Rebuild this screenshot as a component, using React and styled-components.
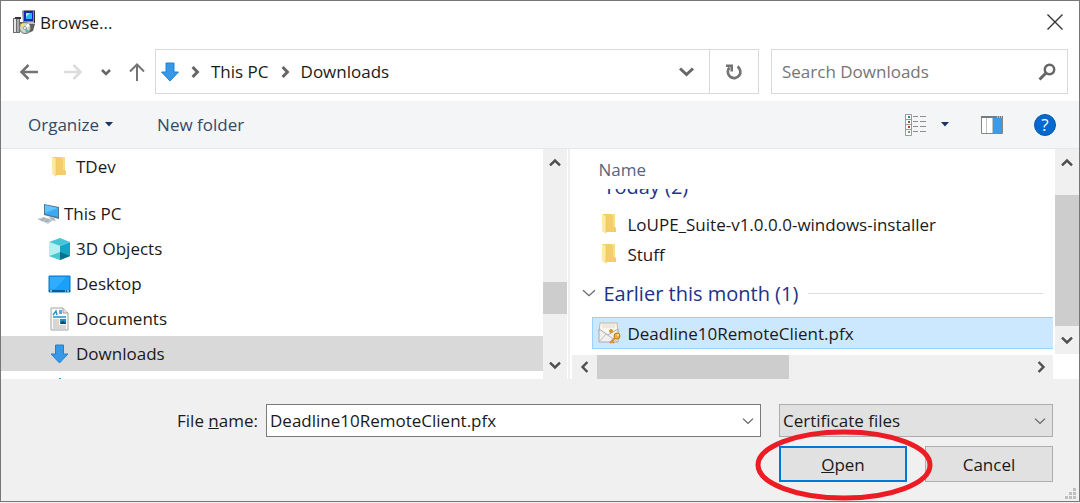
import React, { useState } from 'react';
import styled, { createGlobalStyle } from 'styled-components';

const GlobalStyle = createGlobalStyle`
    * {
        box-sizing: border-box;
    }
    body {
        margin: 0;
        background: #f0f0f0;
    }
    body, button, input, select {
        font-family: "Open Sans", "Noto Sans", sans-serif;
        font-size: 17px;
        color: #1a1a1a;
    }
    button {
        padding: 0;
        border: 0;
        background: none;
    }
    svg {
        display: block;
        flex: none;
    }
`

const Dialog = styled.div`
    display: flex;
    flex-direction: column;
    min-height: calc(100vh - 1px);
    border: 1px solid #777;
    background: #f0f0f0;
`

const TitleBar = styled.header`
    display: flex;
    align-items: center;
    gap: 4px;
    height: 44px;
    padding: 0 15px 2px 11px;
    background: #fff;
`

const Title = styled.h1`
    flex: 1;
    margin: 0;
    font-size: 17px;
    font-weight: 400;
`

const NavBar = styled.nav`
    display: flex;
    gap: 12px;
    height: 56px;
    padding: 4px 11px 7px 18px;
    background: #fff;
`

const NavButtons = styled.div`
    display: grid;
    grid-template-columns: 44px 38px 26px 18px;
    align-items: center;
    margin-right: -2px;
`

const Box = styled.div`
    display: flex;
    align-items: center;
    border: 1px solid #d9d9d9;
    background: #fff;
`

const AddressBar = styled(Box)`
    flex: 1;
    gap: 10px;
    padding-left: 5px;
`

const Crumb = styled.a`
    color: #1a1a1a;
    text-decoration: none;
`

const HistoryButton = styled.button`
    margin-left: auto;
    padding: 0 5px;
`

const RefreshButton = styled.button`
    display: flex;
    align-items: center;
    justify-content: center;
    width: 49px;
    height: 100%;
    border-left: 1px solid #d9d9d9;
`

const SearchBox = styled(Box)`
    width: 297px;
    padding: 0 11px 0 10px;
`

const SearchInput = styled.input`
    flex: 1;
    min-width: 0;
    padding: 0;
    border: 0;
    outline: 0;
    &::placeholder {
        color: #757575;
        opacity: 1;
    }
`

const Toolbar = styled.div`
    display: flex;
    align-items: center;
    height: 48px;
    padding: 0 23px 0 27px;
    border-bottom: 1px solid #e5e8eb;
    background: #f4f5f7;
`

const ToolButton = styled.button`
    display: flex;
    align-items: center;
    gap: 6px;
    margin-right: ${props => props.$space || 0}px;
    color: #33496b;
`

const Push = styled.span`
    flex: 1;
`

const Main = styled.main`
    display: flex;
    height: 230px;
    background: #fff;
`

const TreePane = styled.div`
    display: flex;
    flex: 568;
    min-width: 0;
    border-right: 1px solid #fff;
`

const Tree = styled.ul`
    flex: 1;
    min-width: 0;
    margin: 0;
    padding: 0;
    overflow: hidden;
    list-style: none;
`

const TreeItem = styled.li`
    display: flex;
    align-items: center;
    gap: ${props => props.$root ? 4 : 5}px;
    height: 35px;
    margin-top: ${props => props.$root ? 12 : 0}px;
    padding-left: ${props => props.$root ? 35 : 47}px;
    background: ${props => props.$selected ? '#d9d9d9' : 'transparent'};
`

const FilePane = styled.div`
    display: flex;
    flex: 510;
    flex-direction: column;
    min-width: 0;
    border-left: 2px solid #f0f0f0;
`

const FileArea = styled.div`
    display: flex;
    flex: 1;
    gap: 2px;
    min-height: 0;
`

const FileList = styled.div`
    flex: 1;
    min-width: 0;
    overflow: hidden;
    padding-left: 12px;
`

const ColumnHeader = styled.div`
    position: relative;
    height: 40px;
    padding: 9px 16px 0;
    line-height: 24px;
    color: #54657e;
    background: #fff;
`

const Group = styled.div`
    display: flex;
    align-items: center;
    gap: 7px;
    height: 48px;
    padding-right: 10px;
    font-size: 20px;
    color: #1e3287;
    &::after {
        content: "";
        flex: 1;
        margin-left: 3px;
        border-top: 1px solid #dedede;
    }
`

/* scrolled halfway under the column header */
const ScrolledGroup = styled.div`
    height: 20px;
    padding-left: 21px;
    overflow: hidden;
    font-size: 20px;
    line-height: 28px;
    color: #1e3287;
    & > span {
        display: block;
        margin-top: -16px;
    }
`

const FileRow = styled.div`
    display: flex;
    align-items: center;
    gap: 6px;
    height: ${props => props.$selected ? 32 : 30}px;
    margin-left: 10px;
    padding-left: 5px;
    border: 1px solid ${props => props.$selected ? '#99d1ff' : 'transparent'};
    border-right: 0;
    background: ${props => props.$selected ? '#cce8ff' : 'transparent'};
`

const ScrollBar = styled.div`
    display: flex;
    flex-direction: ${props => props.$horizontal ? 'row' : 'column'};
    flex: none;
    ${props => props.$horizontal ? 'height: 24px;' : 'width: 24px;'}
    background: #f0f0f0;
`

const ScrollButton = styled.button`
    display: flex;
    align-items: center;
    justify-content: center;
    flex: none;
    width: ${props => props.$horizontal ? 25 : 24}px;
    height: ${props => props.$horizontal ? 24 : 28}px;
`

const Track = styled.div`
    display: flex;
    flex-direction: inherit;
    flex: 1;
`

const Gap = styled.div`
    flex: ${props => props.$size};
`

const Thumb = styled(Gap)`
    background: #cdcdcd;
`

const BottomScroll = styled.div`
    margin: 1px 26px 0 2px;
`

const Footer = styled.footer`
    display: grid;
    grid-template-columns: 1fr 495px 274px;
    grid-template-rows: 33px 36px;
    gap: 9px 18px;
    padding: 25px 26px 0 0;
`

const FileLabel = styled.label`
    margin-right: -10px;
    text-align: right;
    line-height: 34px;
`

const FileField = styled.div`
    display: flex;
    align-items: center;
    padding: 0 6px 0 3px;
    border: 1px solid #7a7a7a;
    background: #fff;
`

const FileInput = styled.input`
    flex: 1;
    min-width: 0;
    padding: 0;
    border: 0;
    outline: 0;
    background: none;
`

const SelectField = styled.div`
    display: grid;
    align-items: center;
    border: 1px solid #adadad;
    background: #e1e1e1;
    & > * {
        grid-area: 1 / 1;
    }
    & > svg {
        justify-self: end;
        margin-right: 6px;
        pointer-events: none;
    }
`

const Select = styled.select`
    appearance: none;
    width: 100%;
    height: 100%;
    padding: 0 24px 0 3px;
    border: 0;
    outline: 0;
    background: none;
`

const Actions = styled.div`
    display: grid;
    grid-column: 3;
    grid-template-columns: 1fr 1fr;
    gap: 18px;
`

const ActionButton = styled.button`
    position: relative;
    height: 36px;
    border: ${props => props.$primary ? '2px solid #0078d7' : '1px solid #adadad'};
    background: #e1e1e1;
`

const Highlight = styled.svg`
    position: absolute;
    top: -19px;
    left: -26px;
    z-index: 1;
    pointer-events: none;
`

const Grip = styled.svg`
    position: absolute;
    right: 3px;
    bottom: 3px;
`

const turns = { up: 180, down: 0, left: 90, right: -90 };

const Chevron = ({ dir = 'down', size = 12, weight = 3, color = '#666' }) => (
    <svg width={size} height={size} viewBox={`0 0 ${size} ${size}`}>
        <path
            d={`M1 ${size * 0.3}L${size / 2} ${size * 0.7}L${size - 1} ${size * 0.3}`}
            transform={`rotate(${turns[dir]} ${size / 2} ${size / 2})`}
            fill="none"
            stroke={color}
            strokeWidth={weight}
        />
    </svg>
)

const Arrow = ({ angle = 0, color = '#737373', weight = 2.5 }) => (
    <svg width="20" height="20" viewBox="0 0 20 20">
        <path transform={`rotate(${angle} 10 10)`} d="M19 10H2.500M9.500 3L2.500 10L9.500 17" fill="none" stroke={color} strokeWidth={weight} />
    </svg>
)

const Caret = () => (
    <svg width="8" height="5" viewBox="0 0 8 5"><path d="M0 0H8L4 4.500Z" fill="#1c355e" /></svg>
)

const InstallerIcon = () => (
    <svg width="24" height="25" viewBox="0 0 24 25">
        <path d="M1 8H8V23H1Z" fill="#6d6d6d" />
        <path d="M2 9H4V22H2Z" fill="#e4e4e4" />
        <path d="M5 9H7V22H5Z" fill="#a9a9a9" />
        <path d="M3 7H9V9H3Z" fill="#333" />
        <path d="M8 12L20 12L23 14L21 21L14 24L8 21Z" fill="#5f5f58" />
        <path d="M10 1L12 0H23V13H11Z" fill="#8a8a8a" />
        <path d="M22 1H23V13H22Z" fill="#333" />
        <path d="M12 1H21V11H12Z" fill="#0a2bb0" />
        <path d="M14 3H20V9H14Z" fill="#22b7ff" />
        <path d="M14 3H18L14 7Z" fill="#a9edff" />
        <path d="M12 12H22V14H12Z" fill="#bdbdbd" />
        <circle cx="13" cy="18" r="5.500" fill="#ccd8c7" stroke="#777" />
        <path d="M13 18L8 15L11 13Z" fill="#f5e45f" />
        <path d="M13 18L16 13L18 16Z" fill="#fff" />
        <path d="M13 18L17 21L14 23Z" fill="#48b9bb" />
        <circle cx="13" cy="18" r="1.500" fill="#fff" stroke="#555" strokeWidth=".5" />
    </svg>
)

const DownloadIcon = ({ width = 24 }) => (
    <svg width={width} height="20" viewBox={`${(18 - width) / 2} 0 ${width} 20`}>
        <path d="M5 1H13V10H17.500L9 19L.5 10H5Z" fill="#3898e8" stroke="#2381d2" />
    </svg>
)

const FolderIcon = () => (
    <svg width="23" height="22" viewBox="0 0 23 22">
        <path d="M4 1H17V14L18 15V19H8Z" fill="#f3cd67" />
        <path d="M13 1H17V14H15V4Z" fill="#f9dc87" />
        <path d="M4 1L8 3V21L4 18Z" fill="#ffe9a6" />
        <path d="M8 3V20" stroke="#eac35c" strokeWidth=".6" />
    </svg>
)

const ComputerIcon = () => (
    <svg width="24" height="22" viewBox="0 0 24 22">
        <path d="M8 1L23 4V16L8 12Z" fill="#55758e" />
        <path d="M9 2L22 5V14L9 11Z" fill="#3aaaf5" />
        <path d="M9 2L22 5L9 10Z" fill="#62c3ff" />
        <path d="M13 14L18 15L20 18L15 17Z" fill="#aab5be" />
        <path d="M1 16L8 14L17 17L12 21Z" fill="#c8d0d5" />
        <path d="M3 16L13 19M6 15L15 18M5 18L9 15M9 19L13 16" stroke="#8d9aa3" strokeWidth=".6" />
    </svg>
)

const CubeIcon = () => (
    <svg width="23" height="22" viewBox="0 0 23 22">
        <path d="M1 4L12 8V18L12 22L1 18Z" fill="#8ce3e9" />
        <path d="M12 8L22 4V18L12 22Z" fill="#10a5c9" />
        <path d="M1 4L12 0L22 4L12 8Z" fill="#45c5d5" />
        <path d="M1 18L12 14V22Z" fill="#48c6d3" />
        <path d="M12 14L22 18L12 22Z" fill="#08718c" />
        <path d="M1 4L12 8V14L1 18Z" fill="#b4f0f1" />
    </svg>
)

const DesktopIcon = () => (
    <svg width="23" height="18" viewBox="0 0 23 18">
        <path d="M1 1H22V17H1Z" fill="#18a0fb" stroke="#0874c9" />
        <path d="M2 2H18L7 14H2Z" fill="#30adff" />
        <path d="M1 15H22V17H1Z" fill="#075d9c" />
        <path d="M2 16H4M17 16H18M19 16H21" stroke="#fff" />
    </svg>
)

const DocumentIcon = () => (
    <svg width="23" height="24" viewBox="0 0 23 24">
        <path d="M3 1H15L20 6V23H3Z" fill="#fafafa" stroke="#a4a4a4" />
        <path d="M15 1V6H20" fill="#e4e4e4" stroke="#a4a4a4" />
        <path d="M5 8L8 4L9 8M11 4H14M11 6H14M5 10H18" stroke="#2592cd" strokeWidth="1.400" fill="none" />
        <path d="M5 13H11M5 15H11M5 17H11M5 19H18M5 21H18" stroke="#b1b1b1" />
        <path d="M12 12H18V17H12Z" fill="#2189c8" />
        <path d="M13 15L15 14L18 16V17H12Z" fill="#164b5d" />
    </svg>
)

const CertificateIcon = () => (
    <svg width="23" height="24" viewBox="0 0 23 24">
        <path d="M2 2H19L20 12L10 16L1 11Z" fill="#faf7ef" stroke="#c9b69b" />
        <path d="M4 4H17M4 6H17" stroke="#e2dace" />
        <path d="M1 8L10 14L20 8V21H1Z" fill="#f1f1ef" stroke="#aaa" />
        <path d="M1 21L8 13L11 15L20 21" fill="none" stroke="#bbb" />
        <circle cx="13" cy="10" r="2" fill="#d79a16" />
        <circle cx="19" cy="15" r="3" fill="#efb23e" stroke="#b97816" />
        <path d="M17 17L12 22M14 20L16 22" stroke="#d89426" strokeWidth="2.200" />
        <circle cx="20" cy="14" r="1" fill="#fff2c4" />
    </svg>
)

const RefreshIcon = () => (
    <svg width="18" height="18" viewBox="0 0 18 18">
        <path d="M12.500 3.500A6.300 6.300 0 1 1 4.500 4.500" fill="none" stroke="#737373" strokeWidth="2.700" />
        <path d="M1 1.500H8V8.500H5.500V4H1Z" fill="#737373" />
    </svg>
)

const SearchIcon = () => (
    <svg width="18" height="18" viewBox="0 0 18 18">
        <circle cx="11.500" cy="6.500" r="4.700" fill="none" stroke="#666" strokeWidth="2.500" />
        <path d="M8 10L1.500 16.500" stroke="#666" strokeWidth="3" />
    </svg>
)

const ViewIcon = () => (
    <svg width="22" height="22" viewBox="0 0 22 22">
        <path d="M.5 .5H6.500V21.500H.5ZM.5 5.500H6.500M.5 10.500H6.500M.5 15.500H6.500" fill="#fff" stroke="#999" />
        <path d="M3 2H5V4H3Z" fill="#258c9c" />
        <path d="M3 7H5V9H3Z" fill="#6c6d29" />
        <path d="M3 12H5V14H3Z" fill="#df2a18" />
        <path d="M3 17H5V19H3Z" fill="#6b9d6e" />
        <path d="M8 2.500H13M15 2.500H21M8 7.500H13M15 7.500H21M8 12.500H13M15 12.500H21M8 17.500H13M15 17.500H21" stroke="#8c8c8c" />
    </svg>
)

const PaneIcon = () => (
    <svg width="22" height="18" viewBox="0 0 22 18">
        <path d="M.5 .5H21.500V17.500H.5Z" fill="#fff" stroke="#858585" />
        <path d="M0 0H22V2H0Z" fill="#7b7b7b" />
        <path d="M5.500 2V17M11.500 2V17" stroke="#c4c4c4" />
        <path d="M12 2H21V17H12Z" fill="#3c9be6" />
        <path d="M16 1H17M18 1H19M20 1H21" stroke="#fff" />
    </svg>
)

const HelpBadge = styled.span`
    display: block;
    width: 22px;
    height: 22px;
    border: 1px solid #075aa5;
    border-radius: 50%;
    background: #0568cf;
    color: #fff;
    line-height: 20px;
    text-align: center;
`

const places = [
    { name: 'TDev', icon: <FolderIcon /> },
    { name: 'This PC', icon: <ComputerIcon />, root: true },
    { name: '3D Objects', icon: <CubeIcon /> },
    { name: 'Desktop', icon: <DesktopIcon /> },
    { name: 'Documents', icon: <DocumentIcon /> },
    { name: 'Downloads', icon: <DownloadIcon width={23} /> },
];

const VerticalScroll = ({ before, size, after }) => (
    <ScrollBar>
        <ScrollButton aria-label="Scroll up"><Chevron dir="up" weight={2.5} color="#505050" /></ScrollButton>
        <Track>
            <Gap $size={before} />
            <Thumb $size={size} />
            <Gap $size={after} />
        </Track>
        <ScrollButton aria-label="Scroll down"><Chevron weight={2.5} color="#505050" /></ScrollButton>
    </ScrollBar>
)

function App() {
    const [fileName, setFileName] = useState('Deadline10RemoteClient.pfx');
    const [search, setSearch] = useState('');

    return (
        <Dialog>
            <GlobalStyle />
            <TitleBar>
                <InstallerIcon />
                <Title>Browse...</Title>
                <button aria-label="Close">
                    <svg width="18" height="18" viewBox="0 0 18 18"><path d="M1.500 1.500L16.500 16.500M16.500 1.500L1.500 16.500" stroke="#333" strokeWidth="1.400" /></svg>
                </button>
            </TitleBar>
            <NavBar>
                <NavButtons>
                    <button aria-label="Back"><Arrow /></button>
                    <button aria-label="Forward"><Arrow angle={180} color="#dcdcdc" /></button>
                    <button aria-label="Recent locations"><Chevron size={10} weight={2.5} /></button>
                    <button aria-label="Up"><Arrow angle={90} weight={2} /></button>
                </NavButtons>
                <AddressBar>
                    <DownloadIcon width={18} />
                    <Chevron dir="right" />
                    <Crumb href="#this-pc">This PC</Crumb>
                    <Chevron dir="right" />
                    <Crumb href="#downloads">Downloads</Crumb>
                    <HistoryButton aria-label="Previous locations"><Chevron size={15} /></HistoryButton>
                    <RefreshButton aria-label="Refresh"><RefreshIcon /></RefreshButton>
                </AddressBar>
                <SearchBox>
                    <SearchInput
                        aria-label="Search Downloads"
                        placeholder="Search Downloads"
                        value={search}
                        onChange={e => setSearch(e.target.value)}
                    />
                    <SearchIcon />
                </SearchBox>
            </NavBar>
            <Toolbar>
                <ToolButton $space={44}>Organize <Caret /></ToolButton>
                <ToolButton>New folder</ToolButton>
                <Push />
                <ToolButton aria-label="Change your view" $space={14}><ViewIcon /></ToolButton>
                <ToolButton aria-label="More options" $space={32}><Caret /></ToolButton>
                <ToolButton aria-label="Preview pane" $space={31}><PaneIcon /></ToolButton>
                <ToolButton aria-label="Help"><HelpBadge>?</HelpBadge></ToolButton>
            </Toolbar>
            <Main>
                <TreePane>
                    <Tree>
                        {places.map(place => (
                            <TreeItem key={place.name} $root={place.root} $selected={place.name === 'Downloads'}>
                                {place.icon}
                                {place.name}
                            </TreeItem>
                        ))}
                        <TreeItem>
                            <svg width="23" height="22" viewBox="0 0 23 22"><path d="M12 0V16M12 1L16 5" stroke="#2b9bd8" strokeWidth="2" /></svg>
                        </TreeItem>
                    </Tree>
                    <VerticalScroll before={105} size={32} after={37} />
                </TreePane>
                <FilePane>
                    <FileArea>
                        <FileList>
                            <ColumnHeader>Name</ColumnHeader>
                            <ScrolledGroup><span>Today (2)</span></ScrolledGroup>
                            <FileRow><FolderIcon />LoUPE_Suite-v1.0.0.0-windows-installer</FileRow>
                            <FileRow><FolderIcon />Stuff</FileRow>
                            <Group><Chevron size={14} weight={1.2} />Earlier this month (1)</Group>
                            <FileRow $selected><CertificateIcon />Deadline10RemoteClient.pfx</FileRow>
                        </FileList>
                        <VerticalScroll before={18} size={133} after={0} />
                    </FileArea>
                    <BottomScroll>
                        <ScrollBar $horizontal>
                            <ScrollButton $horizontal aria-label="Scroll left"><Chevron dir="left" weight={2.5} color="#505050" /></ScrollButton>
                            <Track>
                                <Thumb $size={191} />
                                <Gap $size={238} />
                            </Track>
                            <ScrollButton $horizontal aria-label="Scroll right"><Chevron dir="right" weight={2.5} color="#505050" /></ScrollButton>
                        </ScrollBar>
                    </BottomScroll>
                </FilePane>
            </Main>
            <Footer>
                <FileLabel htmlFor="file-name">File <u>n</u>ame:</FileLabel>
                <FileField>
                    <FileInput id="file-name" value={fileName} onChange={e => setFileName(e.target.value)} />
                    <button aria-label="Show file names"><Chevron weight={1.3} /></button>
                </FileField>
                <SelectField>
                    <Select aria-label="File type">
                        <option>Certificate files</option>
                    </Select>
                    <Chevron weight={1.3} />
                </SelectField>
                <Actions>
                    <ActionButton $primary>
                        <u>O</u>pen
                        <Highlight width="178" height="72" viewBox="0 0 178 72">
                            <ellipse cx="89" cy="36" rx="86" ry="33" fill="none" stroke="#ed1c24" strokeWidth="5" />
                        </Highlight>
                    </ActionButton>
                    <ActionButton>Cancel</ActionButton>
                </Actions>
            </Footer>
            <Grip width="12" height="12" viewBox="0 0 12 12">
                <path d="M8 0H11V3H8ZM4 4H7V7H4ZM8 4H11V7H8ZM0 8H3V11H0ZM4 8H7V11H4ZM8 8H11V11H8Z" fill="#bfbfbf" />
            </Grip>
        </Dialog>
    );
}

export default App;
